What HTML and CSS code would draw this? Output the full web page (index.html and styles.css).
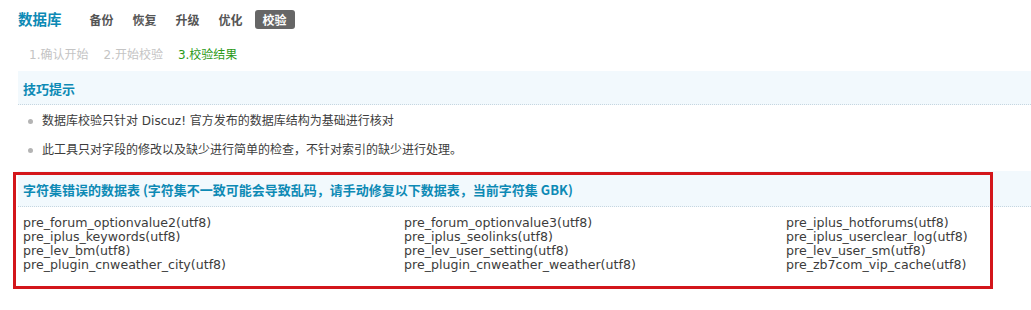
FILE: index.html
```html
<!DOCTYPE html>
<html lang="zh-CN">
<head>
<meta charset="utf-8">
<title>数据库 - 校验</title>
<link rel="stylesheet" href="styles.css">
</head>
<body>
<div class="page">
  <div class="itemtitle">
    <h3 class="title">数据库</h3>
    <ul class="tabs">
      <li class="tab">备份</li>
      <li class="tab">恢复</li>
      <li class="tab">升级</li>
      <li class="tab">优化</li>
      <li class="tab current">校验</li>
    </ul>
  </div>
  <ul class="steps">
    <li class="step">1.确认开始</li>
    <li class="step">2.开始校验</li>
    <li class="step active">3.校验结果</li>
  </ul>
  <div class="band">技巧提示</div>
  <ul class="tips">
    <li class="tip">数据库校验只针对 Discuz! 官方发布的数据库结构为基础进行核对</li>
    <li class="tip">此工具只对字段的修改以及缺少进行简单的检查，不针对索引的缺少进行处理。</li>
  </ul>
  <div class="band band-second">字符集错误的数据表 (字符集不一致可能会导致乱码，请手动修复以下数据表，当前字符集 GBK)</div>
  <div class="tables">
    <div class="col">
      <div>pre_forum_optionvalue2(utf8)</div>
      <div>pre_iplus_keywords(utf8)</div>
      <div>pre_lev_bm(utf8)</div>
      <div>pre_plugin_cnweather_city(utf8)</div>
    </div>
    <div class="col">
      <div>pre_forum_optionvalue3(utf8)</div>
      <div>pre_iplus_seolinks(utf8)</div>
      <div>pre_lev_user_setting(utf8)</div>
      <div>pre_plugin_cnweather_weather(utf8)</div>
    </div>
    <div class="col">
      <div>pre_iplus_hotforums(utf8)</div>
      <div>pre_iplus_userclear_log(utf8)</div>
      <div>pre_lev_user_sm(utf8)</div>
      <div>pre_zb7com_vip_cache(utf8)</div>
    </div>
  </div>
</div>
<div class="highlight"></div>
</body>
</html>
```

FILE: styles.css
```css
html, body {
  margin: 0;
  padding: 0;
  background: #fff;
  overflow: hidden;
}
body {
  position: relative;
  font-family: "DejaVu Sans", "Noto Sans CJK SC", sans-serif;
  font-size: 12px;
  color: #444;
  width: 1031px;
  height: 310px;
}
ul {
  list-style: none;
  margin: 0;
  padding: 0;
}
.page {
  padding-left: 18px;
}
.itemtitle {
  display: flex;
  align-items: center;
  height: 38px;
}
.title {
  margin: 0 20px 0 0;
  font-family: "Noto Sans CJK SC", sans-serif;
  font-size: 14.5px;
  font-weight: 700;
  color: #0d8ab5;
  line-height: 20px;
}
.tabs {
  display: flex;
  align-items: center;
  gap: 3px;
}
.tab {
  font-family: "Noto Sans CJK SC", sans-serif;
  font-weight: 700;
  font-size: 12px;
  color: #555;
  padding: 0 8px;
  line-height: 19px;
  border-radius: 3px;
}
.tab.current {
  background: #666;
  color: #fff;
  margin-left: 1px;
}
.steps {
  display: flex;
  align-items: center;
  height: 33px;
  padding-left: 11px;
  gap: 15px;
}
.step {
  font-family: "DejaVu Sans", "Noto Sans CJK SC", sans-serif;
  font-size: 12px;
  color: #c4c4c4;
  line-height: 16px;
}
.step.active {
  color: #2b9a17;
}
.band {
  background: #f2f9fd;
  border-bottom: 1px dotted #c6d6e0;
  height: 33px;
  line-height: 35px;
  padding-left: 5px;
  font-family: "Noto Sans CJK SC", sans-serif;
  font-weight: 700;
  font-size: 13px;
  color: #0d8ab5;
}
.tips {
  padding: 2px 0 6px;
}
.tip {
  position: relative;
  padding-left: 24px;
  line-height: 29px;
  height: 29px;
  font-family: "DejaVu Sans", "Noto Sans CJK SC", sans-serif;
  color: #3c3c3c;
}
.tip::before {
  content: "";
  position: absolute;
  left: 10px;
  top: 12px;
  width: 5px;
  height: 5px;
  border-radius: 50%;
  background: #b4b4b4;
}
.band-second {
  height: 35px;
  line-height: 37px;
}
.tables {
  display: grid;
  grid-template-columns: 381px 382px auto;
  padding: 9px 0 0 5px;
}
.col div {
  font-family: "DejaVu Sans", sans-serif;
  font-size: 12.6px;
  line-height: 14px;
  color: #3c3c3c;
  white-space: nowrap;
}
.highlight {
  position: absolute;
  left: 13px;
  top: 172px;
  width: 974px;
  height: 111px;
  border: 3px solid #d3161b;
  pointer-events: none;
}
```
